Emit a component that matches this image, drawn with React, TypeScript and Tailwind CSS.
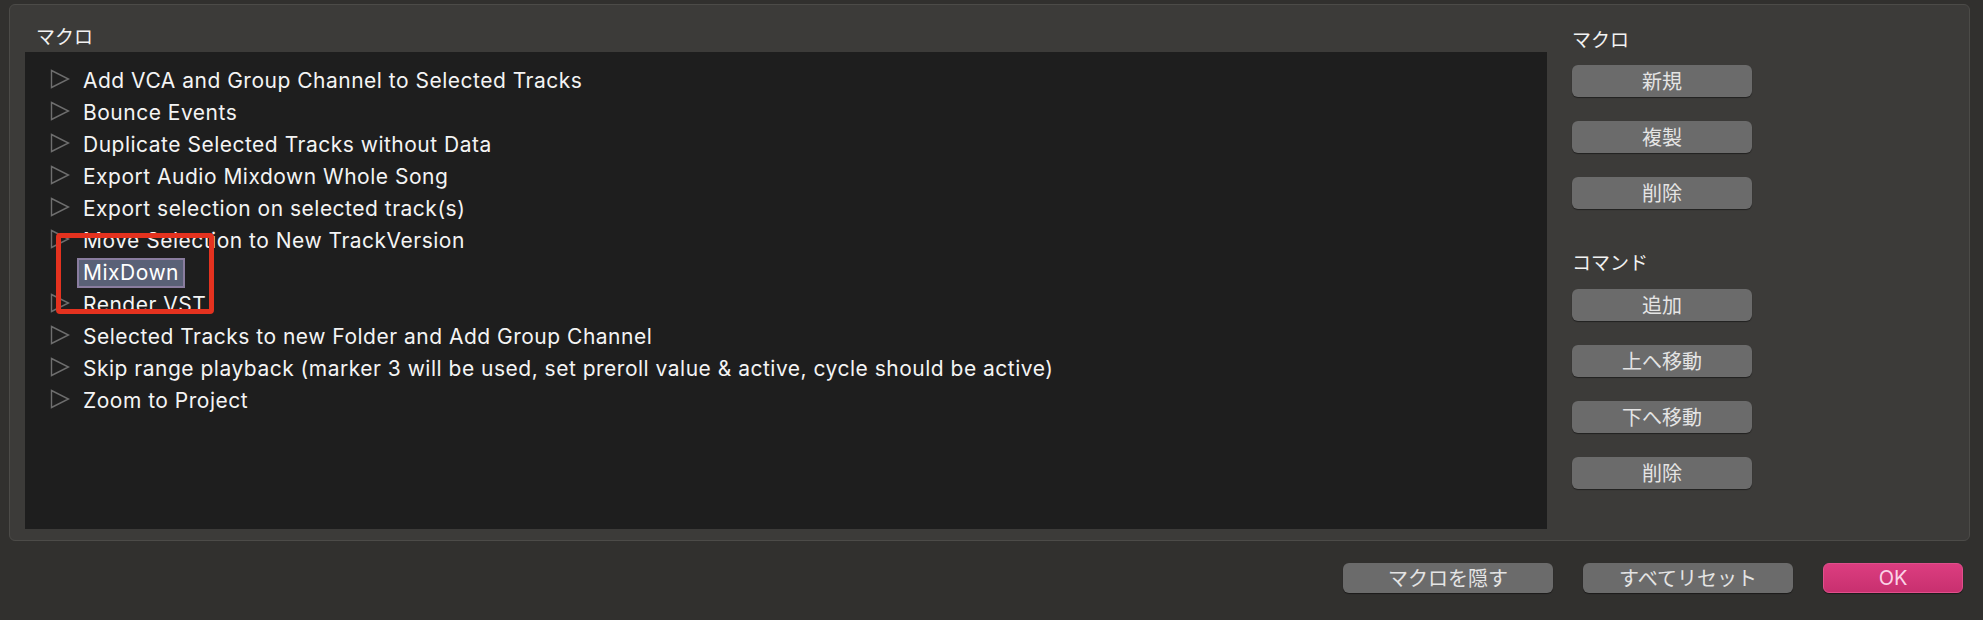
import React from 'react';

// Macro entries shown in the list
const macros = [
  { name: 'Add VCA and Group Channel to Selected Tracks', folder: true },
  { name: 'Bounce Events', folder: true },
  { name: 'Duplicate Selected Tracks without Data', folder: true },
  { name: 'Export Audio Mixdown Whole Song', folder: true },
  { name: 'Export selection on selected track(s)', folder: true },
  { name: 'Move Selection to New TrackVersion', folder: true },
  { name: 'MixDown', folder: false, editing: true },
  { name: 'Render VST', folder: true },
  { name: 'Selected Tracks to new Folder and Add Group Channel', folder: true },
  { name: 'Skip range playback (marker 3 will be used, set preroll value & active, cycle should be active)', folder: true },
  { name: 'Zoom to Project', folder: true },
];

const jp = { fontFamily: '"Noto Sans CJK JP", Inter, sans-serif' };
const latin = { fontFamily: 'Inter, "Noto Sans CJK JP", sans-serif' };

const Triangle = () => (
  <svg width="20" height="20" viewBox="0 0 20 20" className="shrink-0 -mt-[5px]">
    <polygon points="1.5,1.5 18.5,10 1.5,18.5" fill="none" stroke="#6e6e6e" strokeWidth="1.4" strokeLinejoin="miter" />
  </svg>
);

const SideButton: React.FC<{ label: string }> = ({ label }) => (
  <button
    className="h-[32px] w-[180px] rounded-[6px] bg-[#6b6b6b] text-[20px] leading-none text-[#e4e4e4] shadow-[0_1px_1px_rgba(0,0,0,0.45)] flex items-center justify-center"
    style={jp}
  >
    {label}
  </button>
);

const App: React.FC = () => {
  return (
    <div className="w-[1983px] h-[620px] bg-[#31302e] overflow-hidden flex flex-col" style={jp}>
      {/* Group box */}
      <div className="ml-[9px] mt-[4px] w-[1961px] h-[537px] rounded-[6px] border border-[#4c4b48] bg-[#3c3b39] flex">
        {/* Left: macro list */}
        <div className="pl-[15px] pt-[19px] pb-[11px] flex flex-col">
          <div className="h-[24px] leading-[24px] pl-[11px] text-[19px] text-[#f2f2f2] mb-[4px]">マクロ</div>
          <div className="relative w-[1522px] h-[477px] bg-[#1e1e1e] pt-[13px] pl-[25px]">
            {macros.map((m, i) => (
              <div key={i} className="h-[32px] flex items-center text-[21px] tracking-[0.5px] text-[#f4f4f4]" style={latin}>
                {m.folder ? <Triangle /> : <div className="w-[20px] shrink-0" />}
                {m.editing ? (
                  <span className="ml-[7px] h-[30px] flex items-center px-[4px] border-2 border-[#8a7d9f] bg-[#5a6177] text-white">
                    {m.name}
                  </span>
                ) : (
                  <span className="ml-[13px] whitespace-nowrap">{m.name}</span>
                )}
              </div>
            ))}
            {/* annotation box around MixDown */}
            <div className="absolute left-[31px] top-[181px] w-[158px] h-[81px] rounded-[4px] border-[5px] border-[#e4321f]" />
          </div>
        </div>

        {/* Right: buttons */}
        <div className="ml-[25px] pt-[22px] flex flex-col">
          <div className="h-[24px] leading-[24px] text-[19px] text-[#f2f2f2]">マクロ</div>
          <div className="mt-[14px] flex flex-col gap-[24px]">
            <SideButton label="新規" />
            <SideButton label="複製" />
            <SideButton label="削除" />
          </div>
          <div className="mt-[41px] h-[24px] leading-[24px] text-[19px] text-[#f2f2f2]">コマンド</div>
          <div className="mt-[15px] flex flex-col gap-[24px]">
            <SideButton label="追加" />
            <SideButton label="上へ移動" />
            <SideButton label="下へ移動" />
            <SideButton label="削除" />
          </div>
        </div>
      </div>

      {/* Footer buttons */}
      <div className="mt-[22px] pr-[20px] flex justify-end gap-[30px]">
        <button className="h-[30px] w-[210px] rounded-[6px] bg-[#6b6b6b] text-[20px] leading-none text-[#e4e4e4] shadow-[0_1px_1px_rgba(0,0,0,0.45)]">
          マクロを隠す
        </button>
        <button className="h-[30px] w-[210px] rounded-[6px] bg-[#6b6b6b] text-[20px] leading-none text-[#e4e4e4] shadow-[0_1px_1px_rgba(0,0,0,0.45)]">
          すべてリセット
        </button>
        <button
          className="h-[30px] w-[140px] rounded-[6px] border border-[#e04f8c] bg-gradient-to-b from-[#dc3d80] to-[#c8306f] text-[20px] leading-none text-[#fbd3e6] shadow-[0_1px_1px_rgba(0,0,0,0.45)]"
          style={latin}
        >
          OK
        </button>
      </div>
    </div>
  );
};

export default App;
